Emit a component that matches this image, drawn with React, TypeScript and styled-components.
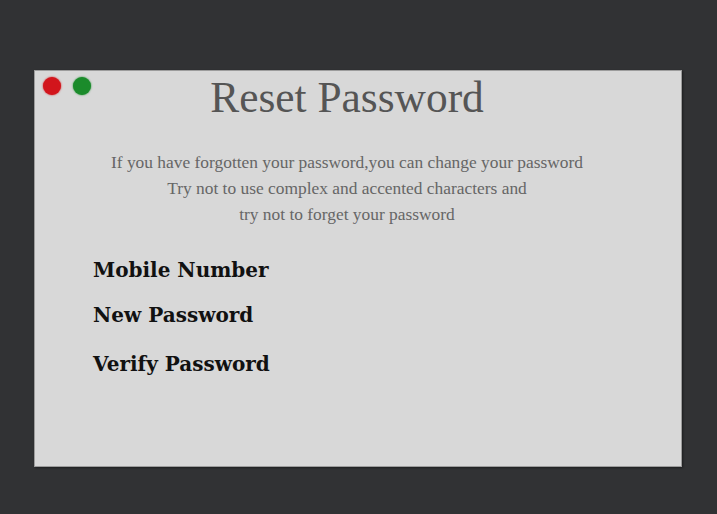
import React from 'react';
import styled, { createGlobalStyle } from 'styled-components';

const GlobalStyle = createGlobalStyle`
  html, body { margin: 0; padding: 0; background: #313234; }
  body { width: 717px; height: 514px; overflow: hidden; }
`;

const Page = styled.div`
  width: 717px;
  height: 514px;
  padding: 70px 0 0 34px;
  box-sizing: border-box;
`;

const Card = styled.div`
  width: 648px;
  height: 397px;
  box-sizing: border-box;
  background: #d8d8d8;
  border: 1px solid #9c9c9c;
  box-shadow: 1px 1px 2px rgba(0, 0, 0, 0.4);
  display: flex;
  flex-direction: column;
`;

const Header = styled.div`
  display: grid;
  grid-template-columns: 80px 1fr 102px;
  align-items: start;
`;

const Dots = styled.div`
  display: flex;
  gap: 12px;
  padding: 6px 0 0 8px;
`;

const Dot = styled.span<{ $color: string }>`
  width: 18px;
  height: 18px;
  border-radius: 50%;
  background: ${p => p.$color};
  box-shadow: 0 0 2px ${p => p.$color};
`;

const Title = styled.h1`
  margin: 0;
  padding-top: 1px;
  text-align: center;
  font-family: "Liberation Serif", serif;
  font-weight: normal;
  font-size: 43.4px;
  line-height: 50px;
  color: #555555;
`;

const Intro = styled.div`
  margin-top: 27px;
  padding-right: 22px;
  text-align: center;
  font-family: "Liberation Serif", serif;
  font-size: 17.4px;
  line-height: 26px;
  color: #666666;
`;

const Fields = styled.div`
  display: flex;
  flex-direction: column;
  padding: 30px 0 0 58px;
`;

const Label = styled.div<{ $gap: number }>`
  margin-top: ${p => p.$gap}px;
  font-family: "DejaVu Serif", serif;
  font-weight: bold;
  font-size: 20px;
  line-height: 26px;
  color: #111111;
`;

export default function App() {
  return (
    <>
      <GlobalStyle />
      <Page>
        <Card>
          <Header>
            <Dots>
              <Dot $color="#d2151c" />
              <Dot $color="#1b8b2b" />
            </Dots>
            <Title>Reset Password</Title>
            <div />
          </Header>
          <Intro>
            If you have forgotten your password,you can change your password<br />
            Try not to use complex and accented characters and<br />
            try not to forget your password
          </Intro>
          <Fields>
            <Label $gap={0}>Mobile Number</Label>
            <Label $gap={19}>New Password</Label>
            <Label $gap={23}>Verify Password</Label>
          </Fields>
        </Card>
      </Page>
    </>
  );
}
